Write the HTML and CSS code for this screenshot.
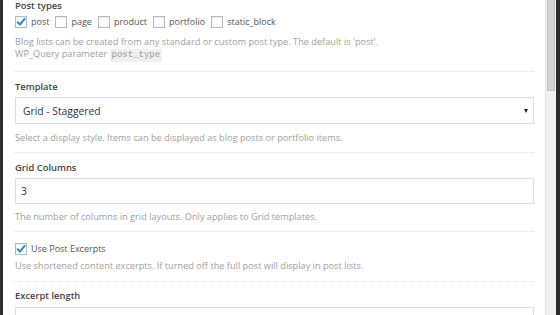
FILE: index.html
```html
<!DOCTYPE html>
<html>
<head>
<meta charset="utf-8">
<link rel="stylesheet" href="styles.css">
</head>
<body>
<div class="page">
  <div class="edge-left"></div>
  <main class="panel">
    <section class="field field-first">
      <div class="label label-first">Post types</div>
      <div class="checks">
        <span class="opt"><span class="box checked"><svg viewBox="0 0 12 12" width="12" height="12"><path d="M2.6 6.2 L4.9 8.6 L9.6 2.9" fill="none" stroke="#1e8cbe" stroke-width="1.9" stroke-linecap="round" stroke-linejoin="round"/></svg></span><span class="opt-text">post</span></span>
        <span class="opt"><span class="box"></span><span class="opt-text">page</span></span>
        <span class="opt"><span class="box"></span><span class="opt-text">product</span></span>
        <span class="opt"><span class="box"></span><span class="opt-text">portfolio</span></span>
        <span class="opt"><span class="box"></span><span class="opt-text">static_block</span></span>
      </div>
      <p class="desc desc-first">Blog lists can be created from any standard or custom post type. The default is 'post'.<br>WP_Query parameter <code class="code">post_type</code></p>
    </section>
    <section class="field">
      <div class="label">Template</div>
      <div class="select"><span class="control-text">Grid - Staggered</span><span class="arrow"></span></div>
      <p class="desc">Select a display style. Items can be displayed as blog posts or portfolio items.</p>
    </section>
    <section class="field">
      <div class="label">Grid Columns</div>
      <div class="input"><span class="control-text">3</span></div>
      <p class="desc desc-input">The number of columns in grid layouts. Only applies to Grid templates.</p>
    </section>
    <section class="field field-check">
      <div class="checks single">
        <span class="opt"><span class="box checked"><svg viewBox="0 0 12 12" width="12" height="12"><path d="M2.6 6.2 L4.9 8.6 L9.6 2.9" fill="none" stroke="#1e8cbe" stroke-width="1.9" stroke-linecap="round" stroke-linejoin="round"/></svg></span><span class="opt-text">Use Post Excerpts</span></span>
      </div>
      <p class="desc desc-check">Use shortened content excerpts. If turned off the full post will display in post lists.</p>
    </section>
    <section class="field field-last">
      <div class="label">Excerpt length</div>
      <div class="input input-last"></div>
    </section>
  </main>
  <div class="scrollbar"><div class="thumb"></div></div>
  <div class="edge-right"></div>
</div>
</body>
</html>
```

FILE: styles.css
```css
html, body {
  margin: 0;
  padding: 0;
  background: #ffffff;
}
body {
  font-family: "Open Sans", "Liberation Sans", sans-serif;
  color: #444;
  overflow: hidden;
}
.page {
  display: flex;
  width: 560px;
  height: 315px;
  overflow: hidden;
}
.edge-left {
  width: 3px;
  flex: none;
  background: #2f2f2f;
}
.panel {
  flex: 1;
  padding: 0 11px 0 12px;
  background: #fff;
}
.field {
  border-bottom: 1px dotted #dcdcdc;
  padding: 8px 0 8px;
}
.field-first {
  padding-top: 0;
  padding-bottom: 10px;
}
.field-check {
  padding-top: 11px;
  padding-bottom: 9px;
}
.field-last {
  border-bottom: none;
  padding-top: 7px;
}
.label {
  font-size: 9.4px;
  font-weight: 600;
  line-height: 14px;
  color: #444;
}
.label-first {
  line-height: 11px;
}
.checks {
  display: flex;
  align-items: center;
  height: 12px;
  margin-top: 5px;
}
.checks.single {
  margin-top: 0;
}
.opt {
  display: flex;
  align-items: center;
  margin-right: 6px;
}
.box {
  width: 10px;
  height: 10px;
  border: 1px solid #b4b9be;
  background: #fff;
  box-shadow: inset 0 1px 2px rgba(0,0,0,0.08);
  position: relative;
  flex: none;
}
.box svg {
  position: absolute;
  left: -1px;
  top: -1px;
}
.opt-text {
  margin-left: 4px;
  font-size: 9px;
  line-height: 12px;
  color: #555;
}
.desc {
  margin: 8px 0 0;
  font-size: 9.2px;
  line-height: 12px;
  color: #a0a0a0;
}
.desc-input {
  margin-top: 7px;
}
.desc-check {
  margin-top: 5px;
}
.code {
  font-family: "Liberation Mono", "DejaVu Sans Mono", monospace;
  font-size: 9px;
  background: #f0f0f0;
  color: #999;
  padding: 1px 2px 2px;
}
.select, .input {
  box-sizing: border-box;
  display: flex;
  align-items: center;
  justify-content: space-between;
  margin-top: 3px;
  border: 1px solid #dedede;
  background: #fff;
}
.select {
  height: 27px;
  padding: 0 5px 0 7px;
}
.input {
  height: 26px;
  padding: 0 5px;
}
.input-last {
  margin-top: 4px;
}
.control-text {
  font-size: 10.3px;
  color: #333;
}
.arrow {
  width: 0;
  height: 0;
  border-left: 2.5px solid transparent;
  border-right: 2.5px solid transparent;
  border-top: 4px solid #222;
}
.scrollbar {
  flex: none;
  background: #f0f0f0;
  border-left: 1px solid #e2e2e2;
  padding: 0 1px;
  box-sizing: border-box;
  width: 11px;
}
.thumb {
  height: 91px;
  background: #d3d3d3;
  border: 1px solid #c2c2c2;
  border-top: none;
  box-sizing: border-box;
  border-radius: 0 0 1px 1px;
}
.edge-right {
  width: 4px;
  flex: none;
  background: #2a2a2a;
}
```
